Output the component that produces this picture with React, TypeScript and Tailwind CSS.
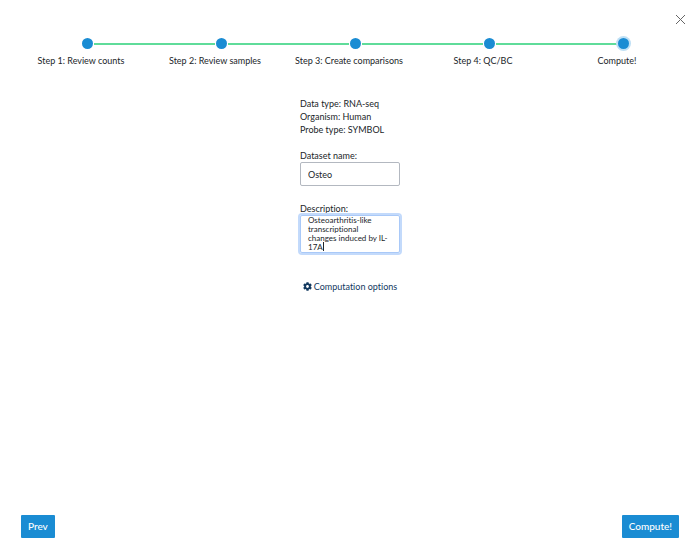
import { useState } from "react";
import { FaCog } from "react-icons/fa";

const STEPS = [
  "Step 1: Review counts",
  "Step 2: Review samples",
  "Step 3: Create comparisons",
  "Step 4: QC/BC",
  "Compute!",
];

const INFO = [
  ["Data type", "RNA-seq"],
  ["Organism", "Human"],
  ["Probe type", "SYMBOL"],
];

export default function App() {
  const [step, setStep] = useState(STEPS.length - 1);
  const [name, setName] = useState("Osteo");
  const [description, setDescription] = useState(
    "Osteoarthritis-like\ntranscriptional\nchanges induced by IL-\n17A"
  );

  return (
    <div className="flex min-h-screen flex-col bg-white font-['Lato',sans-serif] text-[9px] leading-[13px] text-[#212529] [font-variant-ligatures:none]">
      <header className="flex justify-end px-[14px] pt-[14px]">
        <button type="button" aria-label="Close" className="text-[#666]">
          <CloseIcon />
        </button>
      </header>

      <Stepper current={step} />

      <main className="flex flex-1 flex-col items-center pt-[30px]">
        <form className="flex w-[100px] flex-col" onSubmit={(e) => e.preventDefault()}>
          {INFO.map(([label, value]) => (
            <p key={label} className="whitespace-nowrap">
              {label}: {value}
            </p>
          ))}

          <label htmlFor="name" className="mt-[13px]">
            Dataset name:
          </label>
          <input
            id="name"
            type="text"
            value={name}
            onChange={(e) => setName(e.target.value)}
            className="h-[24px] rounded-[2px] border border-[#b3b8c0] px-[7px] outline-none focus:border-[#9cc3f7] focus:ring-2 focus:ring-[#c3dafb]"
          />

          <label htmlFor="description" className="mt-4">
            Description:
          </label>
          <div className="relative flex">
            <textarea
              id="description"
              rows={4}
              value={description}
              onChange={(e) => setDescription(e.target.value)}
              className="h-[38px] w-full resize-none overflow-hidden rounded-[2px] border border-[#a9c9f8] px-[7px] text-[8px] leading-[9px] caret-transparent ring-2 ring-[#c3dafb] outline-none"
            />
            <span className="absolute bottom-[2px] left-[23px] h-[9px] w-px bg-[#212529]" />
          </div>

          <button
            type="button"
            className="mt-[27px] flex items-center justify-center gap-[2px] whitespace-nowrap text-[#12395f]"
          >
            <FaCog size={9} />
            Computation options
          </button>
        </form>
      </main>

      <footer className="flex justify-between px-[21px] pb-[14px]">
        <NavButton label="Prev" onClick={() => setStep(Math.max(step - 1, 0))} />
        <NavButton label="Compute!" onClick={() => setStep(STEPS.length - 1)} />
      </footer>
    </div>
  );
}

function Stepper({ current }: { current: number }) {
  return (
    <ol className="mt-[13px] grid grid-cols-5 pr-[10px] pl-[20px]">
      {STEPS.map((label, i) => (
        <li key={label} className="flex flex-col gap-[5px]">
          <div className="flex items-center gap-px">
            <span className={`h-[2px] flex-1 ${i > 0 ? "bg-[#5fdc9a]" : ""}`} />
            <span
              className={`size-[11px] rounded-full bg-[#1a8cd3] ${
                i === current ? "ring-2 ring-[#bfe0f5]" : ""
              }`}
            />
            <span
              className={`h-[2px] flex-1 ${i < STEPS.length - 1 ? "bg-[#5fdc9a]" : ""}`}
            />
          </div>
          <span className="pr-3 text-center whitespace-nowrap">{label}</span>
        </li>
      ))}
    </ol>
  );
}

function NavButton({ label, onClick }: { label: string; onClick: () => void }) {
  return (
    <button
      type="button"
      onClick={onClick}
      className="h-[23px] rounded-[1px] bg-[#1a8cd3] px-[7px] text-[10px] font-medium text-white"
    >
      {label}
    </button>
  );
}

function CloseIcon() {
  return (
    <svg width="11" height="11" viewBox="0 0 11 11" stroke="currentColor" strokeWidth="1">
      <path d="M1 1l9 9M10 1l-9 9" />
    </svg>
  );
}
